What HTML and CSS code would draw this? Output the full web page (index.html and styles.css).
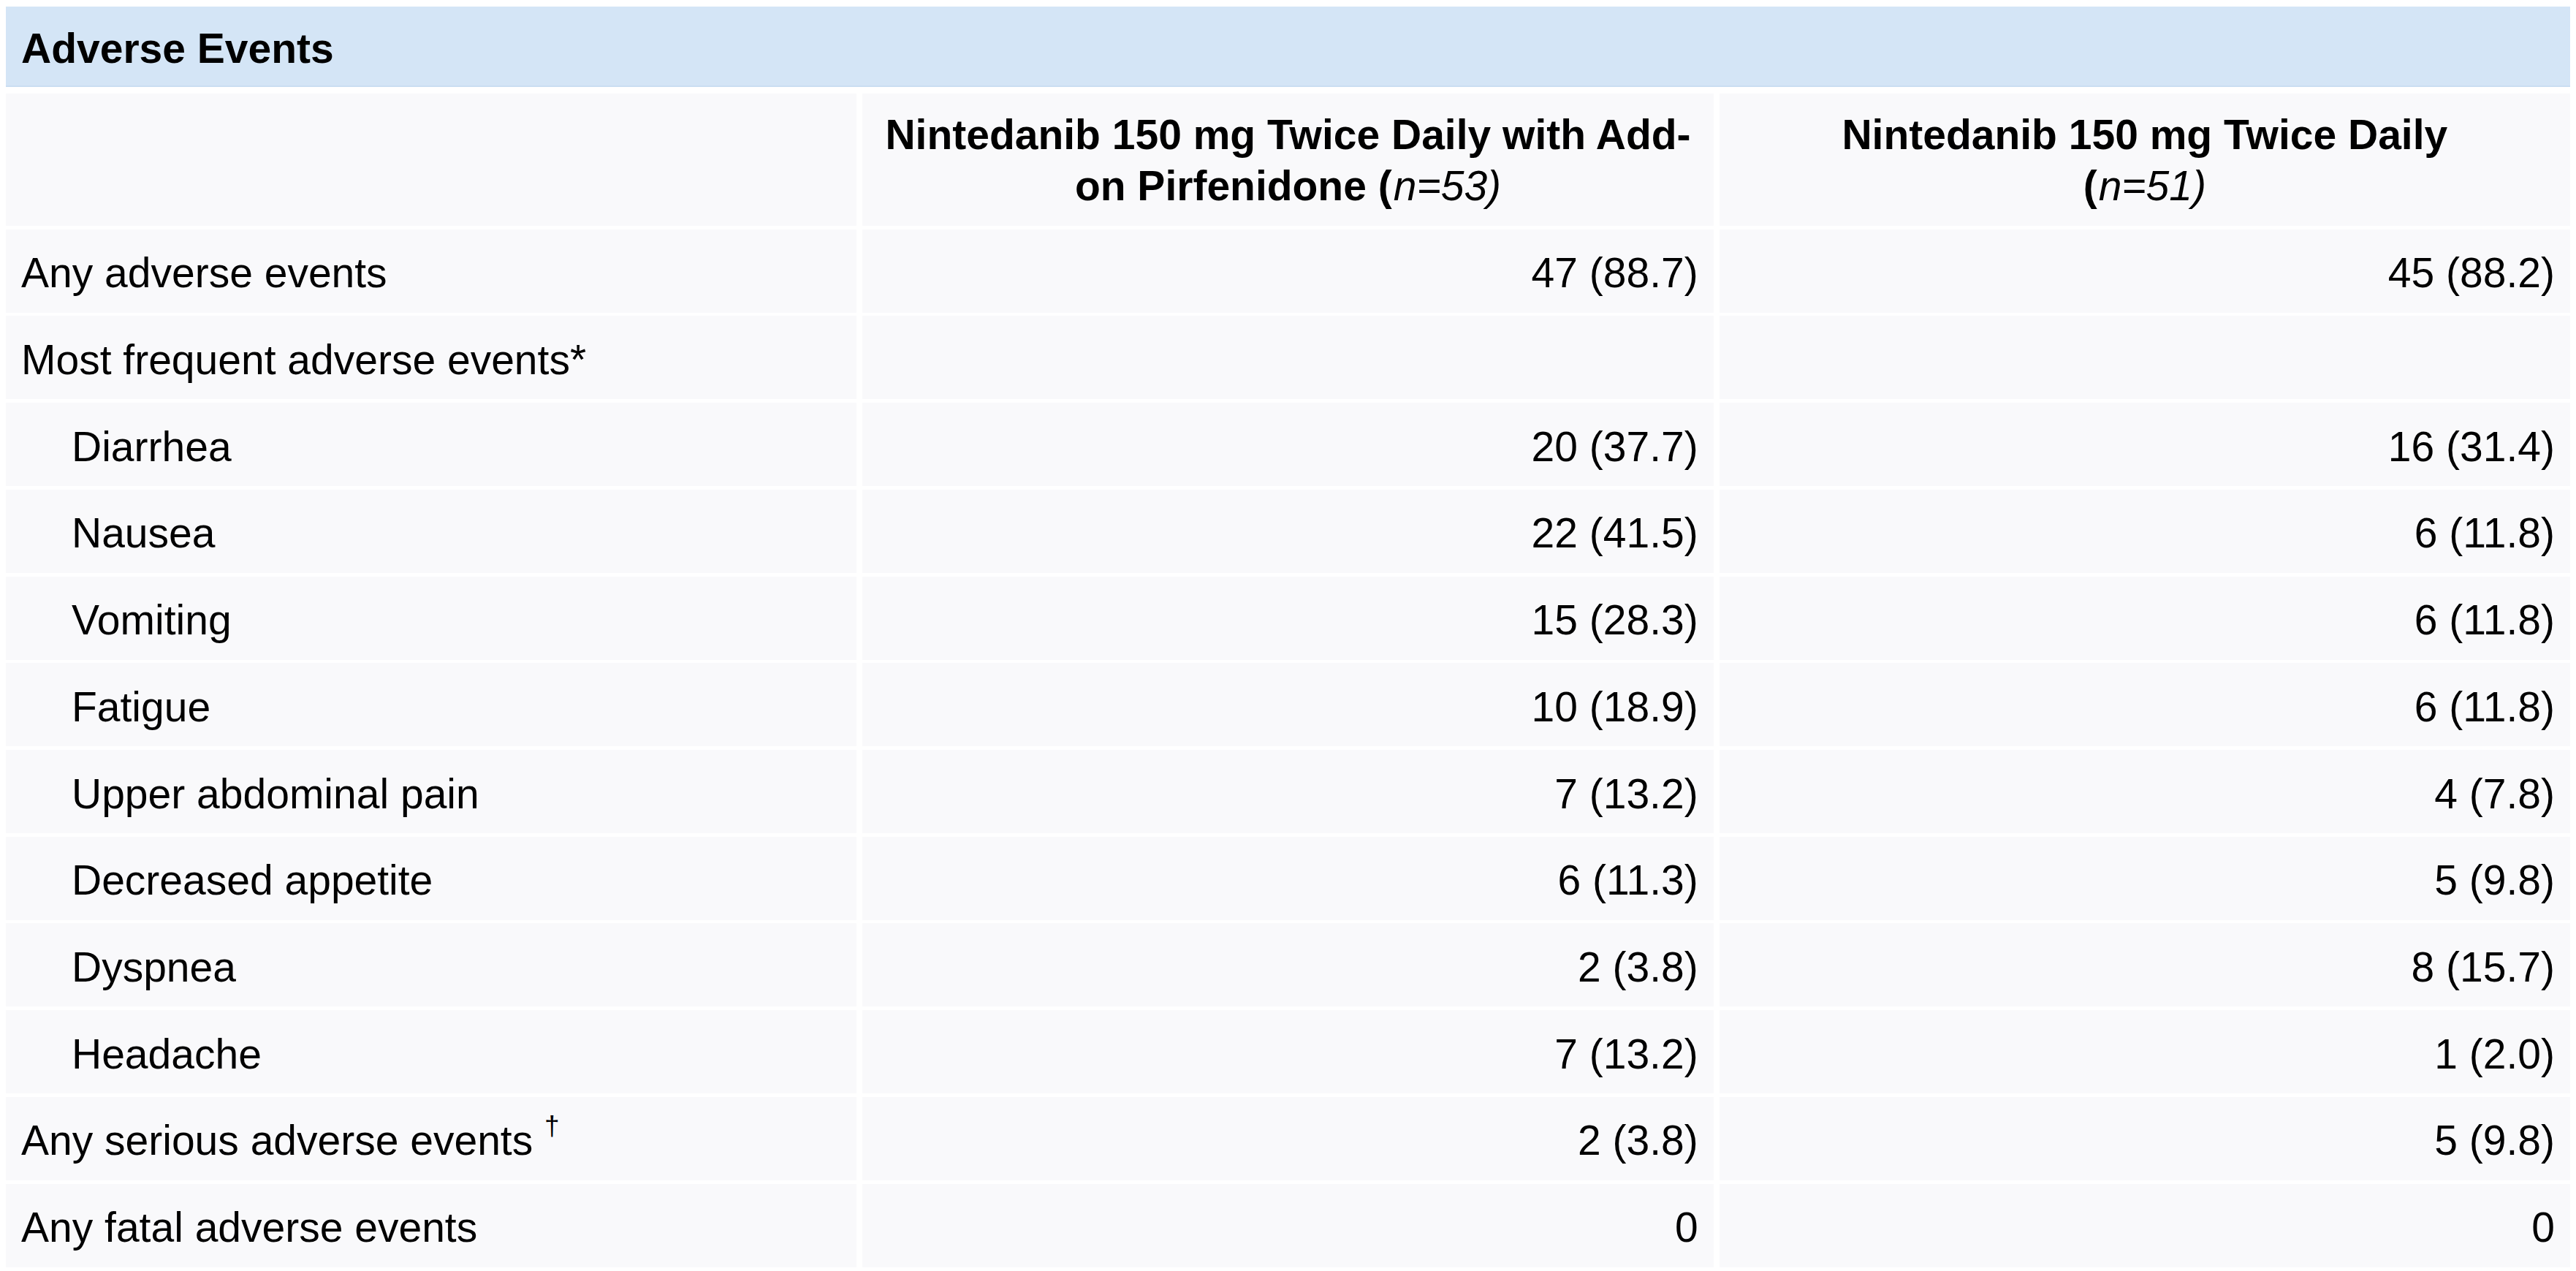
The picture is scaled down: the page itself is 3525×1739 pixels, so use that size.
FILE: index.html
```html
<!DOCTYPE html>
<html lang="en">
<head>
<meta charset="utf-8">
<title>Adverse Events</title>
<link rel="stylesheet" href="styles.css">
</head>
<body>
<section class="panel">
  <h2 class="title">Adverse Events</h2>
  <div class="grid">
    <div class="cell head"></div>
    <div class="cell head"><span class="head-text">Nintedanib 150 mg Twice Daily with Add-on Pirfenidone (<i>n=53)</i></span></div>
    <div class="cell head"><span class="head-text">Nintedanib 150 mg Twice Daily<br>(<i>n=51)</i></span></div>

    <div class="cell label">Any adverse events</div>
    <div class="cell num">47 (88.7)</div>
    <div class="cell num">45 (88.2)</div>

    <div class="cell label">Most frequent adverse events*</div>
    <div class="cell num"></div>
    <div class="cell num"></div>

    <div class="cell label sub">Diarrhea</div>
    <div class="cell num">20 (37.7)</div>
    <div class="cell num">16 (31.4)</div>

    <div class="cell label sub">Nausea</div>
    <div class="cell num">22 (41.5)</div>
    <div class="cell num">6 (11.8)</div>

    <div class="cell label sub">Vomiting</div>
    <div class="cell num">15 (28.3)</div>
    <div class="cell num">6 (11.8)</div>

    <div class="cell label sub">Fatigue</div>
    <div class="cell num">10 (18.9)</div>
    <div class="cell num">6 (11.8)</div>

    <div class="cell label sub">Upper abdominal pain</div>
    <div class="cell num">7 (13.2)</div>
    <div class="cell num">4 (7.8)</div>

    <div class="cell label sub">Decreased appetite</div>
    <div class="cell num">6 (11.3)</div>
    <div class="cell num">5 (9.8)</div>

    <div class="cell label sub">Dyspnea</div>
    <div class="cell num">2 (3.8)</div>
    <div class="cell num">8 (15.7)</div>

    <div class="cell label sub">Headache</div>
    <div class="cell num">7 (13.2)</div>
    <div class="cell num">1 (2.0)</div>

    <div class="cell label"><span>Any serious adverse events <sup class="mark">†</sup></span></div>
    <div class="cell num">2 (3.8)</div>
    <div class="cell num">5 (9.8)</div>

    <div class="cell label">Any fatal adverse events</div>
    <div class="cell num">0</div>
    <div class="cell num">0</div>
  </div>
</section>
</body>
</html>
```

FILE: styles.css
```css
html, body {
  background: #ffffff;
}

body {
  margin: 8px;
  font-family: "Liberation Sans", Arial, sans-serif;
  font-size: 57px;
  color: #000000;
}

.panel {
  padding-top: 1px;
}

.title {
  margin: 0;
  height: 110px;
  box-sizing: border-box;
  display: flex;
  align-items: center;
  padding: 5px 21px 0;
  background: #d4e5f6;
  border-bottom: 2px solid #cadef2;
  font-size: 57px;
  font-weight: bold;
  line-height: 70px;
}

.grid {
  margin-top: 9px;
  display: grid;
  grid-template-columns: repeat(3, 1fr);
  grid-template-rows: 181px repeat(12, 114px);
  column-gap: 8px;
  row-gap: 4.73px;
}

.cell {
  background: #f9f9fb;
  box-sizing: border-box;
  display: flex;
  align-items: center;
  padding: 5px 21px 0;
  line-height: 70px;
  white-space: nowrap;
}

.head {
  justify-content: center;
  text-align: center;
  font-weight: bold;
  white-space: normal;
  padding: 0 21px;
}

.head-text {
  display: block;
  width: 100%;
}

.head i {
  font-weight: normal;
  padding-left: 2px;
}

.num {
  justify-content: flex-end;
}

.sub {
  padding-left: 90px;
}

.mark {
  font-size: 0.65em;
  line-height: 0;
  position: relative;
  top: -0.2em;
  color: #000000;
}
```
